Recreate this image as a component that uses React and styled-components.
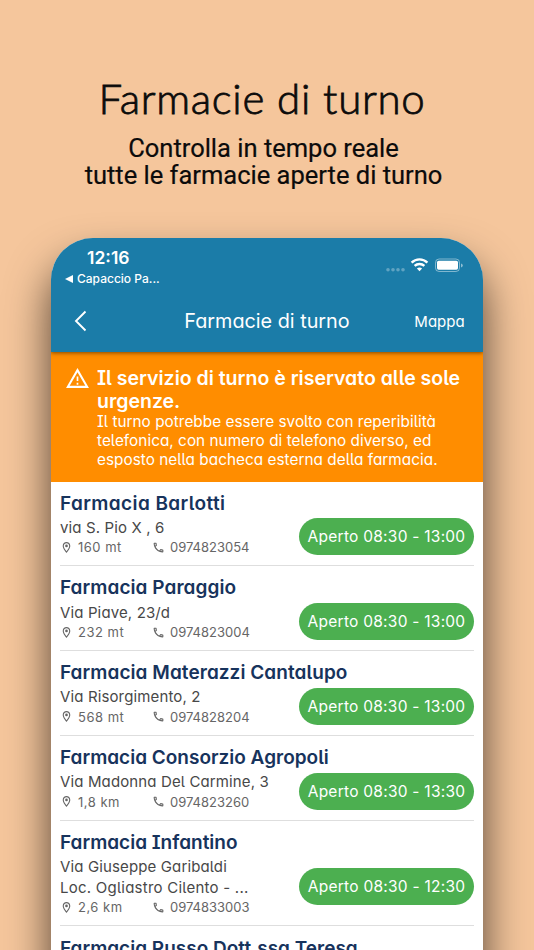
import React from 'react';
import styled, { createGlobalStyle } from 'styled-components';

const GlobalStyle = createGlobalStyle`
  * {
    box-sizing: border-box;
  }
  body {
    margin: 0;
    background-color: #f5c69c;
  }
`;

const Page = styled.div`
  height: 950px;
  overflow: hidden;
  display: flex;
  flex-direction: column;
  align-items: center;
  background-color: #f5c69c;
`;

const Hero = styled.header`
  height: 238px;
  flex-shrink: 0;
  padding: 73px 7px 0 0;
  text-align: center;
  color: #0b0b0b;
`;

const Title = styled.h1`
  margin: 0;
  padding-right: 3px;
  font-family: Lato, sans-serif;
  font-weight: 300;
  font-size: 42px;
  line-height: 50px;
  letter-spacing: 0.7px;
  white-space: nowrap;
  -webkit-text-stroke: 0.8px #0b0b0b;
`;

const Subtitle = styled.p`
  margin: 11.5px 0 0;
  font-family: Roboto, sans-serif;
  font-weight: 400;
  font-size: 25.5px;
  line-height: 27.5px;
  white-space: nowrap;
  -webkit-text-stroke: 0.2px #0b0b0b;
`;

const Phone = styled.main`
  width: 432px;
  height: 860px;
  flex-shrink: 0;
  overflow: hidden;
  border-radius: 42px 42px 0 0;
  background-color: #fff;
  box-shadow: 0 26px 44px rgba(0, 0, 0, 0.68);
  font-family: Inter, sans-serif;
  font-feature-settings: 'cv11', 'cv05', 'cv08';
`;

const TopBar = styled.div`
  position: relative;
  height: 114px;
  background-color: #1b7ca8;
  box-shadow: 0 1px 4px rgba(0, 0, 0, 0.5);
  color: #fff;
`;

const StatusBar = styled.div`
  height: 53px;
  display: flex;
  justify-content: space-between;
  padding: 8px 20px 0 14px;
  font-feature-settings: normal;
`;

const Clock = styled.div`
  padding-left: 22px;
  font-size: 17.5px;
  font-weight: 600;
  line-height: 23px;
`;

const BackToApp = styled.div`
  display: flex;
  align-items: center;
  gap: 4px;
  font-size: 12px;
  font-weight: 500;
  line-height: 20px;
`;

const StatusIcons = styled.svg`
  width: 78px;
  height: 20px;
  margin-top: 9px;
`;

const NavBar = styled.nav`
  height: 60px;
  display: grid;
  grid-template-columns: 90px 1fr 90px;
  align-items: center;
  text-align: center;
`;

const BackIcon = styled.svg`
  width: 14px;
  height: 22px;
  margin-left: 23px;
`;

const NavTitle = styled.h2`
  margin: 0;
  font-size: 19.8px;
  font-weight: 400;
`;

const NavAction = styled.span`
  padding-left: 3px;
  font-size: 15px;
`;

const Notice = styled.section`
  height: 129.5px;
  display: flex;
  gap: 7px;
  padding: 14px 12px 0 14px;
  background-color: #ff8d00;
  color: #fff;
`;

const WarningIcon = styled.svg`
  width: 25px;
  height: 25px;
  flex-shrink: 0;
  fill: #fff;
`;

const NoticeTitle = styled.h3`
  margin: 0;
  padding-top: 1px;
  font-size: 19.5px;
  font-weight: 600;
  line-height: 23px;
  white-space: nowrap;
`;

const NoticeText = styled.p`
  margin: -1px 0 0;
  font-size: 15.3px;
  line-height: 19px;
  letter-spacing: 0.04px;
  white-space: nowrap;
`;

const List = styled.ul`
  margin: 0;
  padding: 0 9px;
  list-style: none;
`;

const Item = styled.li`
  padding: 10.2px 0 8.4px;
  border-bottom: 1px solid #dedede;
`;

const Name = styled.h4`
  margin: 0 0 1.2px;
  font-size: 19px;
  font-weight: 600;
  line-height: 24px;
  letter-spacing: ${props => props.$spacing || '0'};
  color: #17335c;
  white-space: nowrap;
`;

const ItemBody = styled.div`
  display: flex;
  align-items: center;
  justify-content: space-between;
`;

const Address = styled.div`
  font-size: 15px;
  line-height: 21px;
  letter-spacing: ${props => props.$spacing || '0.13px'};
  color: #484848;
  white-space: nowrap;
`;

const Meta = styled.div`
  display: flex;
  height: 19px;
  align-items: center;
  font-size: 13px;
  color: #666;
`;

const MetaCell = styled.span`
  display: flex;
  align-items: center;
  width: ${props => props.$width || 'auto'};
  gap: 5px;
  letter-spacing: ${props => props.$spacing || '0'};
`;

const SmallIcon = styled.svg`
  width: 13px;
  height: 13px;
  fill: #666;
`;

const Badge = styled.span`
  width: 175px;
  height: 37px;
  flex-shrink: 0;
  border-radius: 19px;
  background-color: #4caf50;
  color: #fff;
  font-size: 15.5px;
  letter-spacing: 0.25px;
  line-height: 37px;
  text-align: center;
  white-space: nowrap;
`;

const pharmacies = [
  { name: 'Farmacia Barlotti', spacing: '0.4px', address: ['via S. Pio X , 6'], distance: '160 mt', phone: '0974823054', hours: '08:30 - 13:00' },
  { name: 'Farmacia Paraggio', spacing: '0.06px', address: ['Via Piave, 23/d'], distance: '232 mt', phone: '0974823004', hours: '08:30 - 13:00' },
  { name: 'Farmacia Materazzi Cantalupo', spacing: '0.06px', address: ['Via Risorgimento, 2'], distance: '568 mt', phone: '0974828204', hours: '08:30 - 13:00' },
  { name: 'Farmacia Consorzio Agropoli', address: ['Via Madonna Del Carmine, 3'], distance: '1,8 km', phone: '0974823260', hours: '08:30 - 13:30' },
  { name: 'Farmacia Infantino', address: ['Via Giuseppe Garibaldi', 'Loc. Ogliastro Cilento - ...'], distance: '2,6 km', phone: '0974833003', hours: '08:30 - 12:30' },
  { name: 'Farmacia Russo Dott.ssa Teresa', address: [] }
];

function Pharmacy({ data }) {
  return (
    <Item>
      <Name $spacing={data.spacing}>{data.name}</Name>
      {data.hours && (
        <ItemBody>
          <div>
            {data.address.map((line, idx) => <Address key={line} $spacing={idx > 0 ? '0.24px' : null}>{line}</Address>)}
            <Meta>
              <MetaCell $width="92px" $spacing="0.5px">
                <SmallIcon viewBox="0 0 24 24">
                  <path d="M12 2C8.13 2 5 5.13 5 9c0 5.25 7 13 7 13s7-7.75 7-13c0-3.87-3.13-7-7-7zM7 9c0-2.76 2.24-5 5-5s5 2.24 5 5c0 2.88-2.88 7.19-5 9.88C9.92 16.21 7 11.85 7 9z" />
                  <circle cx="12" cy="9" r="2.5" />
                </SmallIcon>
                {data.distance}
              </MetaCell>
              <MetaCell>
                <SmallIcon viewBox="0 0 24 24">
                  <path d="M6.54 5c.06.89.21 1.76.45 2.59l-1.2 1.2c-.41-1.2-.67-2.47-.76-3.79h1.51m9.86 12.02c.85.24 1.72.39 2.6.45v1.49c-1.32-.09-2.59-.35-3.8-.75l1.2-1.19M7.5 3H4c-.55 0-1 .45-1 1 0 9.39 7.61 17 17 17 .55 0 1-.45 1-1v-3.49c0-.55-.45-1-1-1-1.24 0-2.45-.2-3.57-.57-.1-.04-.21-.05-.31-.05-.26 0-.51.1-.71.29l-2.2 2.2c-2.83-1.45-5.15-3.76-6.59-6.59l2.2-2.2c.28-.28.36-.67.25-1.02C8.7 6.45 8.5 5.25 8.5 4c0-.55-.45-1-1-1z" />
                </SmallIcon>
                {data.phone}
              </MetaCell>
            </Meta>
          </div>
          <Badge>Aperto {data.hours}</Badge>
        </ItemBody>
      )}
    </Item>
  )
}

function App() {
  return (
    <Page>
      <GlobalStyle />
      <Hero>
        <Title>Farmacie di turno</Title>
        <Subtitle>Controlla in tempo reale<br />tutte le farmacie aperte di turno</Subtitle>
      </Hero>
      <Phone>
        <TopBar>
          <StatusBar>
            <div>
              <Clock>12:16</Clock>
              <BackToApp>
                <svg width="8" height="8" viewBox="0 0 8 8" fill="#fff"><path d="M0 4 8 0v8z" /></svg>
                Capaccio Pa...
              </BackToApp>
            </div>
            <StatusIcons viewBox="0 0 78 20" fill="#fff">
              <g opacity="0.3">
                <circle cx="3" cy="14.7" r="1.8" />
                <circle cx="8" cy="14.7" r="1.8" />
                <circle cx="13" cy="14.7" r="1.8" />
                <circle cx="18" cy="14.7" r="1.8" />
              </g>
              <g fill="none" stroke="#fff" strokeWidth="2.4">
                <path d="M26.6 7.6a11.4 11.4 0 0 1 15.8 0" />
                <path d="M29.6 10.9a7.1 7.1 0 0 1 9.8 0" />
              </g>
              <path d="M34.5 16.3 31.9 13.6a3.8 3.8 0 0 1 5.2 0z" />
              <rect x="50.5" y="4" width="24" height="12.5" rx="3.6" fill="none" stroke="#fff" opacity="0.45" />
              <rect x="52" y="5.7" width="21" height="9" rx="1.6" />
              <path d="M76 8.5v4q1.8-.6 1.8-2T76 8.5z" opacity="0.5" />
            </StatusIcons>
          </StatusBar>
          <NavBar>
            <BackIcon viewBox="0 0 14 22" fill="none" stroke="#fff" strokeWidth="1.9">
              <path d="M11.5 1.5 2 11l9.5 9.5" />
            </BackIcon>
            <NavTitle>Farmacie di turno</NavTitle>
            <NavAction>Mappa</NavAction>
          </NavBar>
        </TopBar>
        <Notice>
          <WarningIcon viewBox="0 0 24 24">
            <path d="M12 5.99 19.53 19H4.47L12 5.99M12 2 1 21h22L12 2zm.8 14h-1.6v2h1.6v-2zm0-6h-1.6v4.5h1.6V10z" />
          </WarningIcon>
          <div>
            <NoticeTitle>Il servizio di turno è riservato alle sole<br />urgenze.</NoticeTitle>
            <NoticeText>
              Il turno potrebbe essere svolto con reperibilità<br />
              telefonica, con numero di telefono diverso, ed<br />
              esposto nella bacheca esterna della farmacia.
            </NoticeText>
          </div>
        </Notice>
        <List>
          {pharmacies.map(p => <Pharmacy key={p.name} data={p} />)}
        </List>
      </Phone>
    </Page>
  )
}

export default App;
